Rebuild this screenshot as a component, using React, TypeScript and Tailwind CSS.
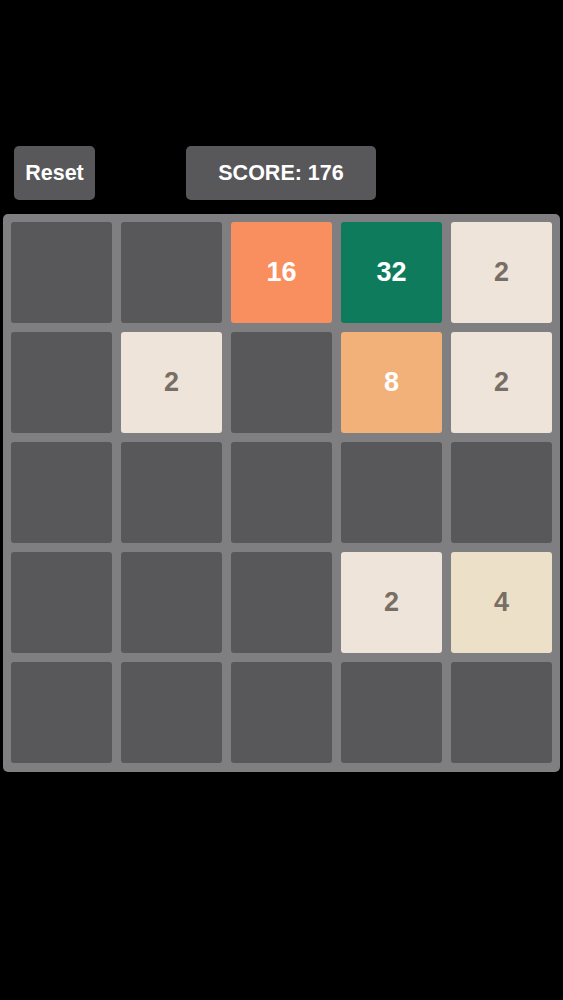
import React from 'react';

type Cell = number | null;

const board: Cell[][] = [
  [null, null, 16, 32, 2],
  [null, 2, null, 8, 2],
  [null, null, null, null, null],
  [null, null, null, 2, 4],
  [null, null, null, null, null],
];

const tileStyles: Record<number, string> = {
  2: 'bg-[#eee4da] text-[#776e65]',
  4: 'bg-[#ede0c8] text-[#776e65]',
  8: 'bg-[#f2b179] text-white',
  16: 'bg-[#f98f5f] text-white',
  32: 'bg-[#0f7b5d] text-white',
};

const Tile = ({ value }: { value: Cell }) => {
  if (value === null) {
    return <div className="h-[101px] w-[101px] rounded-[3px] bg-[#58575a]" />;
  }
  return (
    <div
      className={`flex h-[101px] w-[101px] items-center justify-center rounded-[3px] text-[27px] font-bold ${tileStyles[value]}`}
    >
      {value}
    </div>
  );
};

export default function App() {
  const score = 176;

  return (
    <div className="min-h-[1000px] bg-black pt-[146px] font-['Liberation_Sans',Arial,sans-serif]">
      <div className="flex items-center pl-[14px]">
        <button
          type="button"
          className="flex h-[54px] w-[81px] items-center justify-center rounded-[5px] bg-[#58575a] text-[21.5px] font-bold text-white"
        >
          Reset
        </button>
        <div className="ml-[91px] flex h-[54px] w-[190px] items-center justify-center rounded-[5px] bg-[#58575a] text-[21.5px] font-bold text-white">
          SCORE: {score}
        </div>
      </div>

      <div className="ml-[3px] mt-[14px] grid w-[557px] grid-cols-5 gap-[9px] rounded-[5px] bg-[#7f7e80] px-[8px] pb-[9px] pt-[8px]">
        {board.map((row, r) =>
          row.map((value, c) => <Tile key={`${r}-${c}`} value={value} />)
        )}
      </div>
    </div>
  );
}
